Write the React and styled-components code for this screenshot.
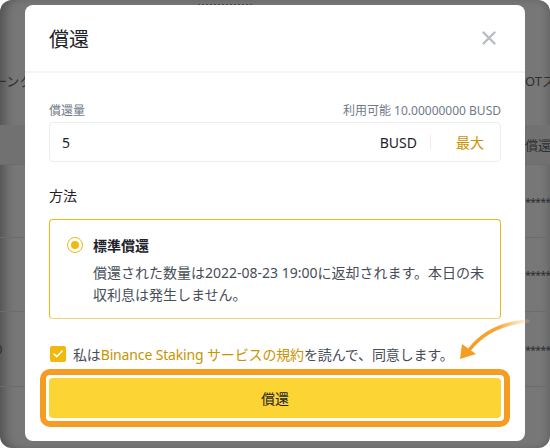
import React from 'react';
import styled, { createGlobalStyle } from 'styled-components';

const GlobalStyle = createGlobalStyle`
  * { box-sizing: border-box; }
  body {
    margin: 0;
    background: #fff;
    font-family: "Noto Sans", "Noto Sans CJK JP", sans-serif;
  }
`

const Frame = styled.div`
  width: 550px;
  height: 448px;
  border-radius: 12px;
  overflow: hidden;
  background: #777777;
  display: grid;
  position: relative;
  box-shadow: inset 10px 0 12px -6px rgba(0,0,0,0.35), inset -6px 0 10px -6px rgba(0,0,0,0.25);
  & > * { grid-area: 1 / 1; }
`

/* page behind the overlay */
const BgPage = styled.div`
  display: flex;
  flex-direction: column;
  color: #2e2e2e;
  font-size: 13px;
`
const Dots = styled.div`
  margin: 4px 0 0 198px;
  width: 54px;
  border-top: 2px dotted #4c4c4c;
`
const BgRow = styled.div`
  height: ${p => p.$h}px;
  margin-top: ${p => p.$mt || 0}px;
  display: flex;
  align-items: center;
  justify-content: space-between;
  background: ${p => p.$dark ? '#717171' : 'transparent'};
  border-bottom: ${p => p.$line ? '1px solid #6c6c6c' : 'none'};
`
const BgLeft = styled.span`
  margin-left: ${p => p.$ml || 0}px;
  white-space: nowrap;
`
const BgRight = styled.span`
  margin-right: -30px;
  width: 55px;
  white-space: nowrap;
  font-size: ${p => p.$fs || 13}px;
  letter-spacing: ${p => p.$ls || 0}px;
`

/* dialog */
const Layer = styled.div`
  padding-top: 5px;
  display: flex;
  justify-content: center;
  align-items: flex-start;
`
const Dialog = styled.div`
  width: 500px;
  background: #fff;
  border-radius: 8px;
  display: flex;
  flex-direction: column;
`
const Header = styled.div`
  height: 68px;
  display: flex;
  align-items: center;
  justify-content: space-between;
  padding: 0 24px 0 24px;
  border-bottom: 2px solid #f3f4f5;
`
const Title = styled.h2`
  margin: 0;
  font-size: 20px;
  font-weight: 400;
  color: #1e2329;
`
const Close = styled.button`
  border: 0;
  background: none;
  padding: 0;
  width: 24px;
  height: 24px;
  display: flex;
  align-items: center;
  justify-content: center;
  cursor: pointer;
`
const Body = styled.div`
  padding: 29px 24px 14px;
  display: flex;
  flex-direction: column;
`
const LabelRow = styled.div`
  display: flex;
  justify-content: space-between;
  align-items: center;
  height: 16px;
  font-size: 12px;
  color: #707a8a;
`
const InputBox = styled.div`
  margin-top: 4px;
  height: 40px;
  border: 1px solid #eaecef;
  border-radius: 4px;
  display: flex;
  align-items: center;
  padding: 0 16px 0 12px;
  font-size: 14px;
  color: #1e2329;
`
const Value = styled.span`
  flex: 1;
`
const Divider = styled.span`
  width: 1px;
  height: 14px;
  background: #eaecef;
  margin: 0 25px 0 13px;
`
const MaxBtn = styled.span`
  color: #c99400;
`
const Section = styled.div`
  margin-top: 24px;
  font-size: 14px;
  line-height: 20px;
  color: #1e2329;
`
const Option = styled.div`
  margin-top: 13px;
  border: 1px solid #f0b90b;
  border-bottom-color: #f3d27a;
  border-radius: 4px;
  padding: 15px 16px 12px 17px;
`
const OptionHead = styled.div`
  display: flex;
  align-items: center;
  gap: 10px;
  height: 20px;
  font-size: 14px;
  font-weight: 700;
  color: #1e2329;
`
const Radio = styled.span`
  width: 16px;
  height: 16px;
  border-radius: 50%;
  border: 1.5px solid #f0b90b;
  display: flex;
  align-items: center;
  justify-content: center;
  &::after {
    content: '';
    width: 8px;
    height: 8px;
    border-radius: 50%;
    background: #f0b90b;
  }
`
const Desc = styled.p`
  margin: 7px 0 0 26px;
  font-size: 14px;
  line-height: 22px;
  color: #474d57;
  white-space: nowrap;
`
const Agree = styled.label`
  margin-top: 25px;
  height: 20px;
  display: flex;
  align-items: center;
  gap: 7px;
  font-size: 14px;
  color: #474d57;
  white-space: nowrap;
  padding-left: 1px;
  letter-spacing: -0.15px;
`
const Check = styled.span`
  width: 16px;
  height: 16px;
  border-radius: 2px;
  background: #f0b90b;
  display: flex;
  align-items: center;
  justify-content: center;
`
const Link = styled.span`
  color: #c99400;
`
const Highlight = styled.div`
  position: relative;
  margin: 5px -9px 0;
  border: 6px solid #f59d22;
  border-radius: 10px;
  padding: 3px;
`
const SubmitButton = styled.button`
  width: 100%;
  height: 40px;
  border: 0;
  border-radius: 4px;
  background: #fcd535;
  font-family: inherit;
  font-size: 14px;
  color: #1e2329;
  cursor: pointer;
`
const Arrow = styled.svg`
  position: absolute;
  left: 366px;
  top: -62px;
  overflow: visible;
`

const App = () => {
  return (
    <>
      <GlobalStyle />
      <Frame>
        <BgPage>
          <Dots />
          <BgRow $h={24} $mt={62}>
            <BgLeft $ml={-6}>ーンク</BgLeft>
            <BgRight>OTス</BgRight>
          </BgRow>
          <BgRow $h={40} $mt={33} $dark $line>
            <span />
            <BgRight>償還中</BgRight>
          </BgRow>
          <BgRow $h={73} $line>
            <span />
            <BgRight $fs={11} $ls={-1}>*****</BgRight>
          </BgRow>
          <BgRow $h={74} $line>
            <span />
            <BgRight $fs={11} $ls={-1}>*****</BgRight>
          </BgRow>
          <BgRow $h={75} $line>
            <BgLeft $ml={-5}>0</BgLeft>
            <BgRight $fs={11} $ls={-1}>*****</BgRight>
          </BgRow>
        </BgPage>

        <Layer>
          <Dialog>
            <Header>
              <Title>償還</Title>
              <Close aria-label="close">
                <svg width="14" height="14" viewBox="0 0 14 14">
                  <path d="M1.5 1.5 L12.5 12.5 M12.5 1.5 L1.5 12.5" stroke="#b7bdc6" strokeWidth="2.4" strokeLinecap="round" />
                </svg>
              </Close>
            </Header>
            <Body>
              <LabelRow>
                <span>償還量</span>
                <span>利用可能 10.00000000 BUSD</span>
              </LabelRow>
              <InputBox>
                <Value>5</Value>
                <span>BUSD</span>
                <Divider />
                <MaxBtn>最大</MaxBtn>
              </InputBox>

              <Section>方法</Section>
              <Option>
                <OptionHead>
                  <Radio />
                  標準償還
                </OptionHead>
                <Desc>
                  償還された数量は2022-08-23 19:00に返却されます。本日の未<br />
                  収利息は発生しません。
                </Desc>
              </Option>

              <Agree>
                <Check>
                  <svg width="10" height="8" viewBox="0 0 10 8">
                    <path d="M1 4 L3.8 6.6 L9 1.2" fill="none" stroke="#fff" strokeWidth="1.6" strokeLinecap="round" strokeLinejoin="round" />
                  </svg>
                </Check>
                <span>私は<Link>Binance Staking サービスの規約</Link>を読んで、同意します。</span>
              </Agree>

              <Highlight>
                <SubmitButton>償還</SubmitButton>
                <Arrow width="120" height="60" viewBox="0 0 120 60">
                  <defs>
                    <linearGradient id="arrowFade" x1="0" y1="0" x2="1" y2="0">
                      <stop offset="0" stopColor="#f59d22" stopOpacity="1" />
                      <stop offset="0.5" stopColor="#f59d22" stopOpacity="0.9" />
                      <stop offset="1" stopColor="#f9c47a" stopOpacity="0.2" />
                    </linearGradient>
                  </defs>
                  <path d="M116 8 Q78 11 58 36" fill="none" stroke="url(#arrowFade)" strokeWidth="3.5" strokeLinecap="round" />
                  <path d="M48 46 L50 31 L64 41 Z" fill="#f59d22" />
                </Arrow>
              </Highlight>
            </Body>
          </Dialog>
        </Layer>
      </Frame>
    </>
  );
};

export default App;
